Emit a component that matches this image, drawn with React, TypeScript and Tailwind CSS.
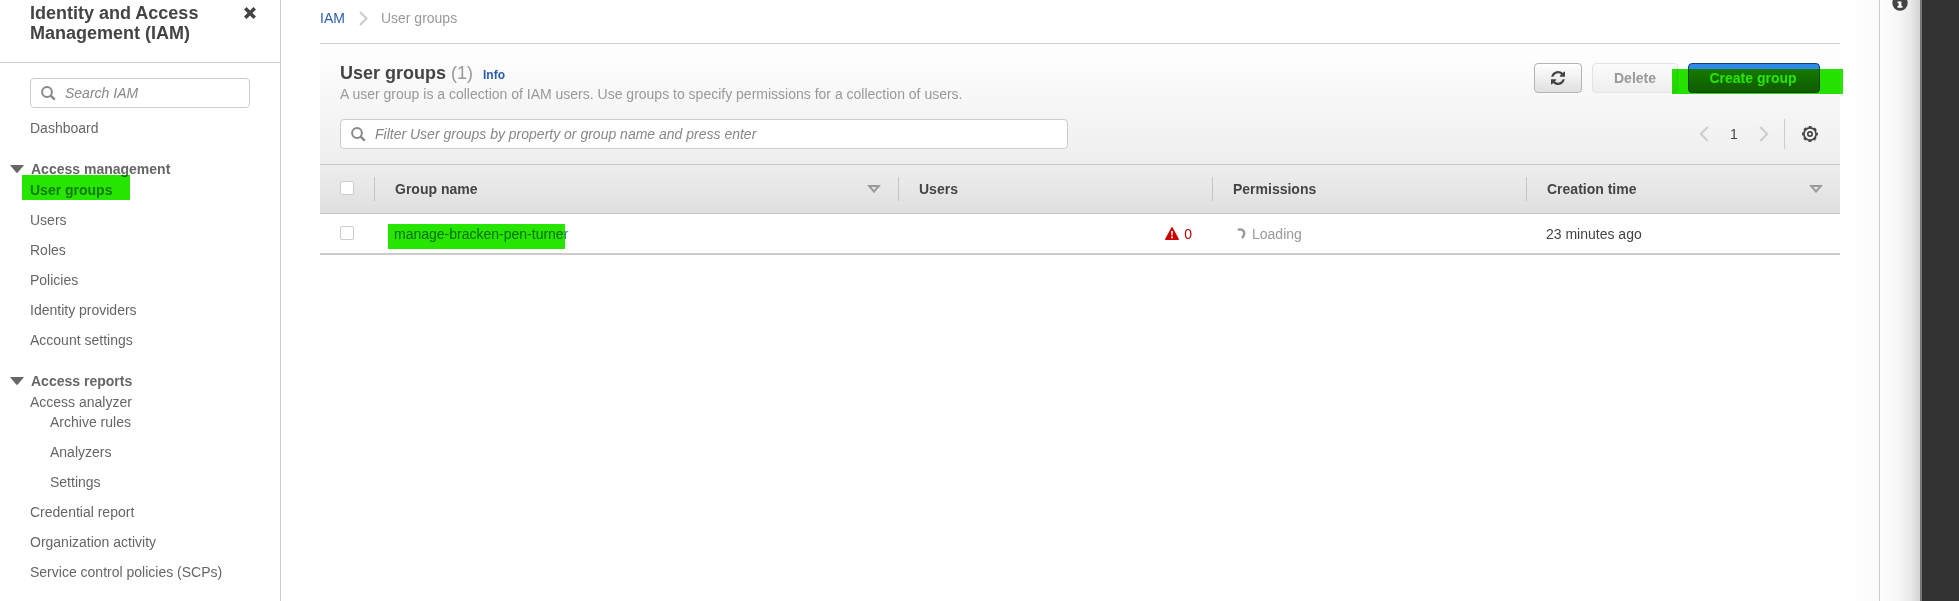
import React from "react";

type IconProps = { className?: string };

function SearchIcon({ className = "" }: IconProps) {
  return (
    <svg className={className} width="15" height="15" viewBox="0 0 15 15" fill="none" stroke="#888">
      <circle cx="6" cy="6" r="4.9" strokeWidth="2" />
      <path d="M9.6 9.6 L13.8 13.6" strokeWidth="2.4" />
    </svg>
  );
}

function CloseIcon() {
  return (
    <svg className="mt-1" width="12" height="12" viewBox="0 0 12 12" stroke="#444" strokeWidth="3.6">
      <path d="M1.3 1.3 L10.7 10.7 M10.7 1.3 L1.3 10.7" />
    </svg>
  );
}

function Caret() {
  return (
    <svg className="mr-[7px] shrink-0" width="14" height="8" viewBox="0 0 14 8" fill="#666">
      <path d="M0 0 H14 L7.8 7.4 Q7 8.2 6.2 7.4 Z" />
    </svg>
  );
}

function RefreshIcon() {
  return (
    <svg width="14" height="14" viewBox="0 0 1536 1536" fill="#444">
      <path d="M1511 928q0 5-1 7-64 268-268 434.500T764 1536q-146 0-282.500-55T238 1324l-129 129q-19 19-45 19t-45-19-19-45V960q0-26 19-45t45-19h448q26 0 45 19t19 45-19 45l-137 137q71 66 161 102t187 36q134 0 250-65t186-179q11-17 53-117 8-23 30-23h192q13 0 22.500 9.500t9.500 22.500zm25-800v448q0 26-19 45t-45 19h-448q-26 0-45-19t-19-45 19-45l138-138Q969 256 768 256q-134 0-250 65T332 500q-11 17-53 117-8 23-30 23H50q-13 0-22.500-9.500T18 608v-7q65-268 270-434.500T768 0q146 0 284 55.500T1297 212l130-129q19-19 45-19t45 19 19 45z" />
    </svg>
  );
}

function GearIcon() {
  return (
    <svg width="16" height="16" viewBox="0 0 16 16" fill="none" stroke="#444">
      <circle cx="8" cy="8" r="6.1" strokeWidth="1.7" />
      <circle cx="8" cy="8" r="7.2" strokeWidth="1.6" strokeDasharray="3 2.655" strokeDashoffset="1.5" />
      <circle cx="8" cy="8" r="2.2" strokeWidth="1.7" />
    </svg>
  );
}

function Chevron({ left = false }: { left?: boolean }) {
  return (
    <svg width="10" height="16" viewBox="0 0 10 16" fill="none" stroke="#ccc" strokeWidth="2">
      <path d={left ? "M8.7 1 L1.8 8 L8.7 15" : "M1.3 1 L8.2 8 L1.3 15"} />
    </svg>
  );
}

function SortIcon() {
  return (
    <svg width="14" height="8" viewBox="0 0 14 8" fill="none" stroke="#999" strokeWidth="2">
      <path d="M2.2 1 H11.8 L7 6.6 Z" />
    </svg>
  );
}

function WarningIcon() {
  return (
    <svg width="14" height="13" viewBox="0 0 14 13">
      <path d="M7 0.7 L13.3 12.3 H0.7 Z" fill="#c00" stroke="#c00" strokeWidth="1.3" strokeLinejoin="round" />
      <path d="M6.1 4 H7.9 L7.6 8.4 H6.4 Z M6.1 9.4 H7.9 V11.2 H6.1 Z" fill="#fff" />
    </svg>
  );
}

function Spinner() {
  return (
    <svg width="9" height="12" viewBox="0 0 9 12" fill="none" stroke="#999" strokeWidth="2.4">
      <path d="M0.8 1.9 C4.5 0.4 7.5 2.5 7.2 5.8 C7.1 7.8 6.2 9 4.8 9.9" />
    </svg>
  );
}

function Highlight({ className }: { className: string }) {
  return <span className={`pointer-events-none absolute bg-[#26e600] mix-blend-multiply ${className}`} />;
}

function NavLink({ children, indent = false }: { children: React.ReactNode; indent?: boolean }) {
  return <a className={indent ? "mb-[10px] block pl-5" : "mb-[10px] block"}>{children}</a>;
}

function NavHeading({ children }: { children: React.ReactNode }) {
  return (
    <div className="-ml-5 flex items-center font-bold">
      <Caret />
      {children}
    </div>
  );
}

function Sidebar() {
  return (
    <aside className="h-full w-[281px] shrink-0 border-r border-[#ccc] text-[#666]">
      <div className="flex h-[63px] items-start border-b border-[#ccc] pt-[3px] pl-[30px] text-[#444]">
        <h1 className="w-[214px] text-[18px] leading-5 font-bold">
          Identity and Access
          <br />
          Management (IAM)
        </h1>
        <CloseIcon />
      </div>
      <nav className="pt-[15px] pl-[30px]">
        <div className="mb-[10px] flex h-[30px] w-[220px] items-center rounded border border-[#ccc] bg-white pl-[10px] text-[#888] italic">
          <SearchIcon className="mr-[9px]" />
          Search IAM
        </div>
        <a className="mb-[21px] block">Dashboard</a>
        <NavHeading>Access management</NavHeading>
        <div className="relative mt-px mb-[10px] font-bold text-[#888]">
          User groups
          <Highlight className="-top-[5px] -left-2 h-[25px] w-[108px]" />
        </div>
        <NavLink>Users</NavLink>
        <NavLink>Roles</NavLink>
        <NavLink>Policies</NavLink>
        <NavLink>Identity providers</NavLink>
        <a className="mb-[21px] block">Account settings</a>
        <NavHeading>Access reports</NavHeading>
        <a className="mt-px block">Access analyzer</a>
        <NavLink indent>Archive rules</NavLink>
        <NavLink indent>Analyzers</NavLink>
        <NavLink indent>Settings</NavLink>
        <NavLink>Credential report</NavLink>
        <NavLink>Organization activity</NavLink>
        <NavLink>Service control policies (SCPs)</NavLink>
      </nav>
    </aside>
  );
}

function Checkbox() {
  return <span className="-mt-[2px] block h-[14px] w-[14px] rounded-[2px] border border-[#ccc] bg-white" />;
}

function HeaderCell({ label, sortable = false, width }: { label: string; sortable?: boolean; width: string }) {
  return (
    <div className={`flex h-6 items-center border-l border-[#c4c4c4] pr-[17px] pl-5 ${width}`}>
      <span className="grow">{label}</span>
      {sortable && <SortIcon />}
    </div>
  );
}

function GroupsPanel() {
  return (
    <section className="border-t border-b-2 border-[#ccc]">
      <div className="h-[120px] bg-linear-to-b from-white to-[#eee] px-5 pt-[19px]">
        <div className="flex h-[41px] items-start justify-between">
          <div>
            <h2 className="flex h-5 items-baseline text-[18px] leading-5 font-bold text-[#444]">
              User groups
              <span className="ml-[5px] font-normal text-[#999]">(1)</span>
              <a className="ml-[10px] text-[12px] leading-none text-[#2a5db0]">Info</a>
            </h2>
            <p className="mt-px leading-5 text-[#999]">
              A user group is a collection of IAM users. Use groups to specify permissions for a collection of users.
            </p>
          </div>
          <div className="flex gap-[10px] font-bold">
            <button className="flex h-[30px] w-12 items-center justify-center rounded border border-[#b4b4b4] bg-linear-to-b from-white to-[#e0e0e0]">
              <RefreshIcon />
            </button>
            <button className="h-[30px] w-[86px] rounded border border-[#e3e3e3] bg-linear-to-b from-[#fcfcfc] to-[#eee] text-[#999]">
              Delete
            </button>
            <div className="relative">
              <button className="block h-[30px] w-[132px] rounded border border-[#12406f] bg-[linear-gradient(to_bottom,#2d8ae8_5px,#9088d0_5px,#6464a0_100%)] pr-[2px] text-white">
                Create group
              </button>
              <Highlight className="top-[6px] -left-4 h-[25px] w-[171px]" />
            </div>
          </div>
        </div>
        <div className="mt-[15px] flex h-[30px] items-center">
          <div className="flex h-[30px] w-[728px] items-center rounded border border-[#ccc] bg-white pl-[10px] text-[#888] italic">
            <SearchIcon className="mr-[9px]" />
            Filter User groups by property or group name and press enter
          </div>
          <div className="ml-auto flex h-[30px] items-center text-[#444]">
            <Chevron left />
            <span className="w-[50px] text-center">1</span>
            <Chevron />
            <span className="mr-[17px] ml-[15px] h-[30px] w-px bg-[#ccc]" />
            <GearIcon />
            <span className="w-[2px]" />
          </div>
        </div>
      </div>

      <div className="flex h-[50px] items-center border-y border-[#c8c8c8] bg-linear-to-b from-[#eee] to-[#dfdfdf] font-bold text-[#444]">
        <div className="w-[54px] pl-5">
          <Checkbox />
        </div>
        <HeaderCell label="Group name" sortable width="w-[524px]" />
        <HeaderCell label="Users" width="w-[314px]" />
        <HeaderCell label="Permissions" width="w-[314px]" />
        <HeaderCell label="Creation time" sortable width="w-[314px]" />
      </div>

      <div className="flex h-[39px] items-center text-[#444]">
        <div className="w-[54px] pl-5">
          <Checkbox />
        </div>
        <div className="w-[524px] pl-5">
          <a className="relative inline-block text-[#3a7cc0]">
            manage-bracken-pen-turner
            <Highlight className="top-0 -left-[6px] h-[25px] w-[177px]" />
          </a>
        </div>
        <div className="flex w-[314px] items-center justify-end gap-[5px] pr-5 text-[#b00]">
          <WarningIcon />0
        </div>
        <div className="flex w-[314px] items-center gap-[6px] pl-[25px] text-[#999]">
          <Spinner />
          Loading
        </div>
        <div className="w-[314px] pl-5">23 minutes ago</div>
      </div>
    </section>
  );
}

function HelpRail() {
  return (
    <div className="flex h-full w-[80px] shrink-0">
      <div className="h-full w-[41px] overflow-hidden border-l border-[#ccc] bg-[linear-gradient(to_right,#fefefe_0%,#f7f7f7_45%,#eaeaea_75%,#d2d2d2_100%)] pl-[12px]">
        <svg className="-mt-[5px]" width="16" height="16" viewBox="0 0 16 16">
          <circle cx="8" cy="8" r="7.7" fill="#444" />
          <path d="M6.3 2.5 H9.3 V5 H6.3 Z M5.5 6.4 H9.4 V11.1 H10.5 V12.8 H5.5 V11.1 H6.6 V8 H5.5 Z" fill="#fff" />
        </svg>
      </div>
      <div className="h-full grow border-l-2 border-[#777] bg-[#333]" />
    </div>
  );
}

export default function App() {
  return (
    <div className="flex h-[601px] w-[1959px] overflow-hidden bg-white font-['Liberation_Sans',Arial,sans-serif] text-[14px] leading-5">
      <Sidebar />
      <main className="w-[1598px] shrink-0 bg-[linear-gradient(to_right,#fff_1565px,#fbfbfb_1598px)] pr-[39px] pl-[39px]">
        <div className="flex h-[43px] items-start pt-2 text-[#999]">
          <a className="text-[#2a5db0]">IAM</a>
          <svg className="mt-[3px] mr-[13px] ml-[14px]" width="9" height="15" viewBox="0 0 9 15" fill="none" stroke="#ccc" strokeWidth="2">
            <path d="M1 1 L7.5 7.5 L1 14" />
          </svg>
          User groups
        </div>
        <GroupsPanel />
      </main>
      <HelpRail />
    </div>
  );
}
